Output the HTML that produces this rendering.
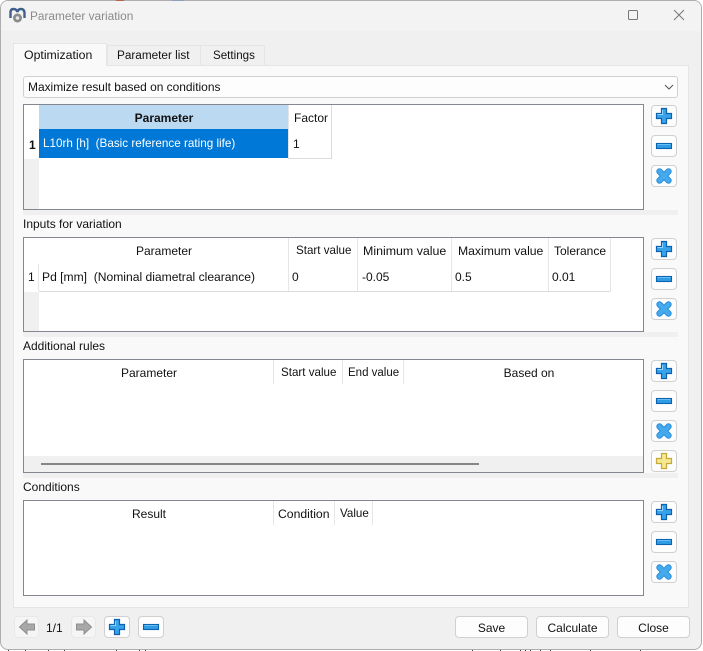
<!DOCTYPE html>
<html><head><meta charset="utf-8"><style>
html,body{margin:0;padding:0;background:#fff;}
#p{position:relative;width:703px;height:651px;overflow:hidden;background:#fff;font-family:"Liberation Sans",sans-serif;font-size:12px;color:#111;}
#p div,#p span,#p svg{position:absolute;box-sizing:border-box;}
.t{white-space:pre;line-height:16px;height:16px;}
.c{text-align:center;}
.tb{background:#fff;border:1px solid #828790;}
.v{width:1px;background:#e6e6e6;}
.h{height:1px;background:#dcdcdc;}
.b{width:26px;height:22px;background:#fdfdfd;border:1px solid #d0d0d0;border-radius:4px;}
.b svg{left:3px;top:1px;width:18px;height:18px;}
.g{background:#f0f0f0;}
.bt{height:22px;top:616px;background:#fdfdfd;border:1px solid #d0d0d0;border-radius:4px;text-align:center;line-height:22px;}
.band{left:23px;width:655px;height:5px;background:#f0f0f0;}
.k{top:650px;width:1px;height:1px;background:#333;}
</style></head><body><div id="p">
<svg width="0" height="0" style="position:absolute"><defs>
<g id="plus"><path d="M6.5 1.5h5v5h5v5h-5v5h-5v-5h-5v-5h5z" fill="#37a3ea" stroke="#0b62b0" stroke-width="1.2"/><path d="M7.5 3v4.5h-5" fill="none" stroke="#8fd3fa" stroke-width="1"/></g>
<g id="minus"><rect x="1.5" y="6.5" width="15" height="5" fill="#2f9de6" stroke="#0b62b0" stroke-width="1.1"/><path d="M2.5 7.5h13" stroke="#7cc8f6" stroke-width=".8"/></g>
<g id="x"><path d="M4.5 4.5l9 9M13.5 4.5l-9 9" stroke="#2b8fdc" stroke-width="6.4" stroke-linecap="round"/><path d="M4.5 4.5l9 9M13.5 4.5l-9 9" stroke="#45a9ee" stroke-width="4.4" stroke-linecap="round"/></g>
<g id="yp"><path d="M6.5 1.5h5v5h5v5h-5v5h-5v-5h-5v-5h5z" fill="#f6e88e" stroke="#c4a93a" stroke-width="1.2"/></g>
</defs></svg>

<div style="left:0;top:0;width:702px;height:650px;background:#f0f0f0;border:1px solid #aeaeae;border-radius:8px;overflow:hidden;">
<div style="left:0;top:0;width:702px;height:30px;background:#f3f3f3;"></div>
</div>
<div style="left:116px;top:0;width:8px;height:1px;background:#b5654f"></div>
<div style="left:172px;top:0;width:12px;height:1px;background:#8f9db8"></div>
<div class="k" style="left:8px"></div><div class="k" style="left:25px"></div><div class="k" style="left:48px"></div><div class="k" style="left:64px"></div><div class="k" style="left:116px"></div><div class="k" style="left:139px"></div><div class="k" style="left:145px"></div><div class="k" style="left:472px"></div><div class="k" style="left:500px"></div><div class="k" style="left:520px"></div><div class="k" style="left:525px"></div><div class="k" style="left:530px"></div><div class="k" style="left:540px"></div><div class="k" style="left:550px"></div><div class="k" style="left:590px"></div><div class="k" style="left:640px"></div>
<svg style="left:9px;top:7px;width:17px;height:17px" viewBox="0 0 17 17"><path d="M1.5 11V5.5Q1.5 2 4.5 2T8.5 5Q9 2 12 2t3.5 3.5V11" fill="none" stroke="#3f5f8c" stroke-width="2.4"/><circle cx="8.5" cy="11" r="4.5" fill="#8a8a8a"/><circle cx="8.5" cy="11" r="1.8" fill="#e8e8e8"/></svg>
<span class="t" style="left:30px;top:8px;color:#8a8a8a;font-size:11.85px">Parameter variation</span>
<svg style="left:628px;top:10px;width:11px;height:11px"><rect x="0.5" y="0.5" width="9" height="9" rx="1" fill="none" stroke="#777"/></svg>
<svg style="left:673px;top:9px;width:12px;height:12px"><path d="M1 1l10 10M11 1L1 11" stroke="#777" stroke-width="1"/></svg>

<!-- tab pane -->
<div style="left:13px;top:65px;width:676px;height:543px;background:#f9f9f9;border:1px solid #e5e5e5;"></div>
<div style="left:13px;top:43px;width:94px;height:23px;background:#f9f9f9;border:1px solid #e5e5e5;border-bottom:0;"></div>
<div style="left:107px;top:45px;width:94px;height:21px;background:#f0f0f0;border:1px solid #e5e5e5;"></div>
<div style="left:200px;top:45px;width:65px;height:21px;background:#f0f0f0;border:1px solid #e5e5e5;"></div>
<span class="t" style="left:24px;top:47px;font-size:12.3px">Optimization</span>
<span class="t" style="left:117px;top:48px;font-size:11.75px">Parameter list</span>
<span class="t" style="left:213px;top:48px;font-size:11.6px">Settings</span>

<!-- combo -->
<div style="left:23px;top:76px;width:655px;height:22px;background:#fdfdfd;border:1px solid #d0d0d0;border-radius:3px;"></div>
<span class="t" style="left:28px;top:79px;font-size:11.95px">Maximize result based on conditions</span>
<svg style="left:664px;top:84px;width:11px;height:7px"><path d="M1 1l4 4 4-4" fill="none" stroke="#555" stroke-width="1"/></svg>

<div class="band" style="top:210px"></div>
<div class="band" style="top:332px"></div>
<div class="band" style="top:473px"></div>

<!-- table 1 -->
<div class="tb" style="left:23px;top:104px;width:621px;height:106px;"></div>
<div class="g" style="left:24px;top:159px;width:15px;height:50px;"></div>
<div style="left:39px;top:105px;width:250px;height:24px;background:#bbdaf2;"></div>
<div style="left:39px;top:129px;width:249px;height:29px;background:#0078d7;"></div>
<div class="v" style="left:331px;top:105px;height:53px;background:#dcdcdc"></div>
<div class="v" style="left:288px;top:105px;height:53px;"></div>
<div class="h" style="left:288px;top:158px;width:44px;"></div>
<span class="t c" style="left:39px;top:110px;width:250px;font-weight:bold;">Parameter</span>
<span class="t" style="left:294px;top:110px;">Factor</span>
<span class="t" style="left:29px;top:137px;font-weight:bold;">1</span>
<span class="t" style="left:43px;top:136px;color:#fff;font-size:11.7px">L10rh [h]  (Basic reference rating life)</span>
<span class="t" style="left:293px;top:136px;">1</span>

<!-- table 2 -->
<span class="t" style="left:23px;top:216px;">Inputs for variation</span>
<div class="tb" style="left:23px;top:237px;width:621px;height:95px;"></div>
<div class="g" style="left:24px;top:292px;width:15px;height:39px;"></div>
<div class="h" style="left:39px;top:291px;width:572px;"></div>
<div class="v" style="left:38px;top:264px;height:27px;"></div>
<div class="v" style="left:288px;top:238px;height:53px;"></div>
<div class="v" style="left:357px;top:238px;height:53px;"></div>
<div class="v" style="left:451px;top:238px;height:53px;"></div>
<div class="v" style="left:548px;top:238px;height:53px;"></div>
<div class="v" style="left:610px;top:238px;height:54px;"></div>
<span class="t c" style="left:39px;top:243px;width:250px;">Parameter</span>
<span class="t" style="left:296px;top:243px;font-size:11.6px">Start value</span>
<span class="t" style="left:363px;top:243px;font-size:12.4px">Minimum value</span>
<span class="t" style="left:458px;top:243px;font-size:12.2px">Maximum value</span>
<span class="t" style="left:554px;top:243px;">Tolerance</span>
<span class="t" style="left:28px;top:269px;">1</span>
<span class="t" style="left:42px;top:269px;font-size:12.1px">Pd [mm]  (Nominal diametral clearance)</span>
<span class="t" style="left:292px;top:269px;">0</span>
<span class="t" style="left:362px;top:269px;">-0.05</span>
<span class="t" style="left:455px;top:269px;">0.5</span>
<span class="t" style="left:552px;top:269px;">0.01</span>

<!-- table 3 -->
<span class="t" style="left:23px;top:338px;">Additional rules</span>
<div class="tb" style="left:23px;top:359px;width:621px;height:114px;"></div>
<div class="g" style="left:24px;top:456px;width:619px;height:16px;"></div>
<div style="left:41px;top:463px;width:438px;height:2px;background:#858585;"></div>
<div class="v" style="left:273px;top:360px;height:24px;"></div>
<div class="v" style="left:342px;top:360px;height:24px;"></div>
<div class="v" style="left:403px;top:360px;height:24px;"></div>
<span class="t c" style="left:24px;top:365px;width:250px;">Parameter</span>
<span class="t" style="left:281px;top:365px;font-size:11.6px">Start value</span>
<span class="t" style="left:348px;top:365px;font-size:11.5px">End value</span>
<span class="t c" style="left:404px;top:365px;width:250px;">Based on</span>

<!-- table 4 -->
<span class="t" style="left:23px;top:479px;">Conditions</span>
<div class="tb" style="left:23px;top:500px;width:621px;height:96px;"></div>
<div class="v" style="left:273px;top:501px;height:24px;"></div>
<div class="v" style="left:334px;top:501px;height:24px;"></div>
<div class="v" style="left:372px;top:501px;height:24px;"></div>
<span class="t c" style="left:24px;top:506px;width:250px;">Result</span>
<span class="t" style="left:278px;top:506px;font-size:12.2px">Condition</span>
<span class="t" style="left:340px;top:506px;font-size:11.6px">Value</span>

<!-- side buttons -->
<div class="b" style="left:651px;top:105px"><svg viewBox="0 0 18 18"><use href="#plus"/></svg></div>
<div class="b" style="left:651px;top:135px"><svg viewBox="0 0 18 18"><use href="#minus"/></svg></div>
<div class="b" style="left:651px;top:165px"><svg viewBox="0 0 18 18"><use href="#x"/></svg></div>
<div class="b" style="left:651px;top:238px"><svg viewBox="0 0 18 18"><use href="#plus"/></svg></div>
<div class="b" style="left:651px;top:268px"><svg viewBox="0 0 18 18"><use href="#minus"/></svg></div>
<div class="b" style="left:651px;top:298px"><svg viewBox="0 0 18 18"><use href="#x"/></svg></div>
<div class="b" style="left:651px;top:360px"><svg viewBox="0 0 18 18"><use href="#plus"/></svg></div>
<div class="b" style="left:651px;top:390px"><svg viewBox="0 0 18 18"><use href="#minus"/></svg></div>
<div class="b" style="left:651px;top:420px"><svg viewBox="0 0 18 18"><use href="#x"/></svg></div>
<div class="b" style="left:651px;top:450px"><svg viewBox="0 0 18 18"><use href="#yp"/></svg></div>
<div class="b" style="left:651px;top:501px"><svg viewBox="0 0 18 18"><use href="#plus"/></svg></div>
<div class="b" style="left:651px;top:531px"><svg viewBox="0 0 18 18"><use href="#minus"/></svg></div>
<div class="b" style="left:651px;top:561px"><svg viewBox="0 0 18 18"><use href="#x"/></svg></div>

<!-- bottom -->
<div class="b" style="left:14px;top:616px;width:25px;background:#f5f5f5;border-color:#e8e8e8"><svg viewBox="0 0 18 18"><path d="M9 2L1.5 9 9 16v-4h7.5V6H9z" fill="#a8a8a8" stroke="#8e8e8e"/></svg></div>
<span class="t" style="left:46px;top:620px;">1/1</span>
<div class="b" style="left:71px;top:616px;width:25px;background:#f5f5f5;border-color:#e8e8e8"><svg viewBox="0 0 18 18"><path d="M9 2l7.5 7L9 16v-4H1.5V6H9z" fill="#a8a8a8" stroke="#8e8e8e"/></svg></div>
<div class="b" style="left:104px;top:616px;"><svg viewBox="0 0 18 18"><use href="#plus"/></svg></div>
<div class="b" style="left:138px;top:616px;"><svg viewBox="0 0 18 18"><use href="#minus"/></svg></div>
<div class="bt" style="left:455px;width:73px;">Save</div>
<div class="bt" style="left:536px;width:73px;">Calculate</div>
<div class="bt" style="left:617px;width:73px;">Close</div>
</div></body></html>
